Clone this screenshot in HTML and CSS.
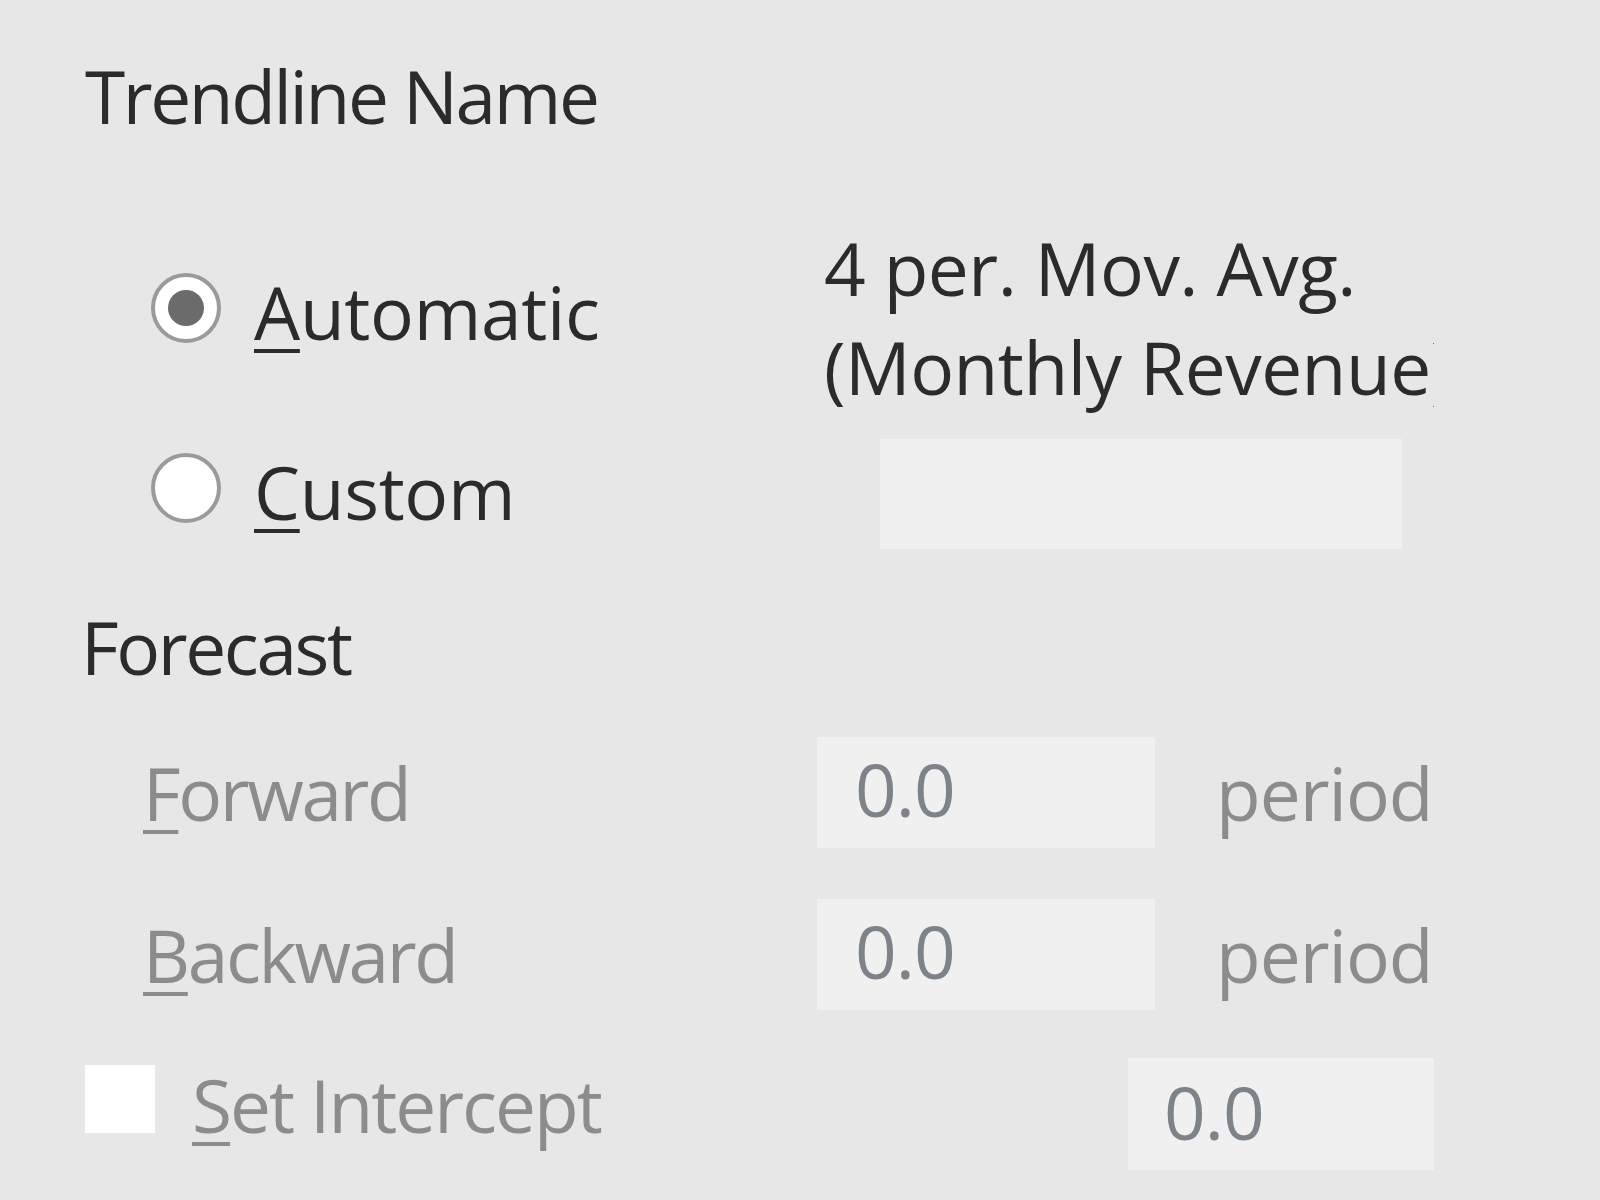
FILE: index.html
```html
<!DOCTYPE html>
<html lang="en">
<head>
<meta charset="utf-8">
<title>Format Trendline</title>
<link rel="stylesheet" href="styles.css">
</head>
<body>
<div class="pane">
  <div class="title">Trendline Name</div>

  <div class="name-grid">
    <div class="radio-row auto">
      <span class="radio checked"><span class="dot"></span></span>
      <span class="lbl"><u>A</u>utomatic</span>
    </div>
    <div class="auto-name">4 per. Mov. Avg.<br>(Monthly Revenue)</div>
    <div class="radio-row custom">
      <span class="radio"></span>
      <span class="lbl"><u>C</u>ustom</span>
    </div>
    <div class="name-cell"><div class="field name-field"></div></div>
  </div>

  <div class="title forecast">Forecast</div>

  <div class="fc-row fwd">
    <span class="fc-lbl"><u>F</u>orward</span>
    <div class="field num">0.0</div>
    <span class="unit">periods</span>
  </div>

  <div class="fc-row bwd">
    <span class="fc-lbl"><u>B</u>ackward</span>
    <div class="field num">0.0</div>
    <span class="unit">periods</span>
  </div>

  <div class="int-row">
    <span class="check"></span>
    <span class="int-lbl"><u>S</u>et Intercept</span>
    <div class="field num int-field">0.0</div>
  </div>
</div>
</body>
</html>
```

FILE: styles.css
```css
html, body {
  margin: 0;
  padding: 0;
}
body {
  width: 1600px;
  height: 1200px;
  background: #e7e7e7;
  font-family: "Open Sans", "Noto Sans", sans-serif;
  font-size: 73px;
  line-height: 73px;
  color: #2b2b2b;
  overflow: hidden;
}
.pane {
  width: 1434px;
  overflow: hidden;
  white-space: nowrap;
}
u {
  text-decoration-thickness: 4px;
  text-underline-offset: 9px;
}
.title {
  padding-top: 59px;
  padding-left: 85px;
  height: 73px;
  letter-spacing: -2.4px;
}
.name-grid {
  display: grid;
  grid-template-columns: 821px 613px;
  margin-top: 86px;
}
.radio-row {
  display: flex;
  align-items: center;
  padding-left: 151px;
  height: 73px;
}
.radio-row.auto { padding-top: 57px; }
.radio-row.custom { padding-top: 39px; }
.radio {
  box-sizing: border-box;
  width: 70px;
  height: 70px;
  border-radius: 50%;
  border: 4px solid #9a9a9a;
  background: #ffffff;
  margin-bottom: 8px;
  display: flex;
  align-items: center;
  justify-content: center;
  flex: none;
}
.dot {
  width: 36px;
  height: 36px;
  border-radius: 50%;
  background: #6b6b6b;
}
.lbl {
  margin-left: 33px;
  letter-spacing: -0.3px;
}
.auto-name {
  line-height: 99px;
  overflow: hidden;
  padding-left: 3px;
  letter-spacing: -0.5px;
}
.name-cell {
  padding-top: 23px;
  padding-left: 59px;
}
.field {
  background: #f0f0f0;
  box-sizing: border-box;
}
.name-field {
  width: 522px;
  height: 110px;
}
.title.forecast {
  padding-top: 61px;
  padding-left: 81px;
}
.fc-row {
  display: flex;
  align-items: center;
  color: #8c8c8c;
  overflow: hidden;
}
.fc-row.fwd { margin-top: 54px; height: 111px; }
.fc-row.bwd { margin-top: 50px; height: 112px; }
.fc-lbl {
  width: 674px;
  padding-left: 143px;
  flex: none;
  letter-spacing: -2.4px;
}
.num {
  color: #7e838a;
  padding-left: 38px;
  padding-bottom: 8px;
  line-height: 103px;
  letter-spacing: -1px;
}
.fc-row .num {
  width: 338px;
  height: 111px;
  flex: none;
}
.unit {
  margin-left: 61px;
  letter-spacing: -1px;
}
.int-row {
  display: flex;
  align-items: flex-start;
  margin-top: 48px;
  height: 112px;
  color: #8c8c8c;
}
.check {
  width: 70px;
  height: 68px;
  background: #ffffff;
  margin-left: 85px;
  margin-top: 7px;
  flex: none;
}
.int-lbl {
  margin-left: 37px;
  margin-top: 10px;
  letter-spacing: -2px;
}
.int-field {
  margin-left: auto;
  width: 306px;
  height: 112px;
  line-height: 107px;
  padding-bottom: 5px;
  padding-left: 36px;
}
```
